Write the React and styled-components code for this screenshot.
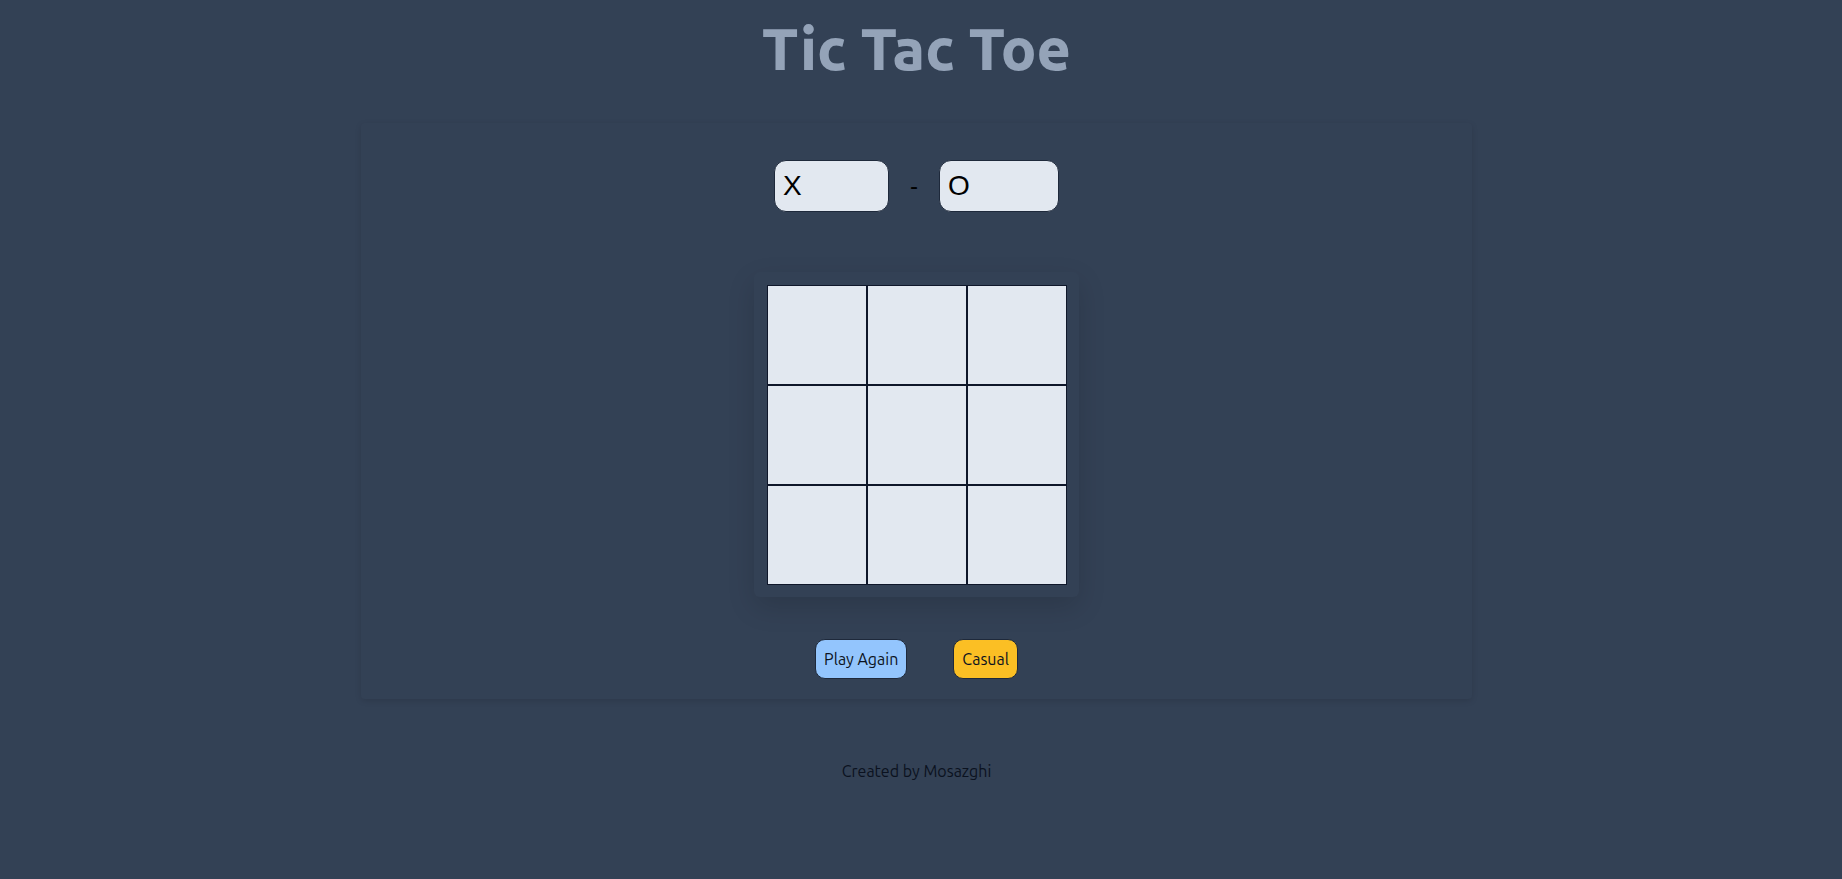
import styled, { createGlobalStyle } from 'styled-components';

const GlobalStyle = createGlobalStyle`
  * { box-sizing: border-box; }
  body {
    margin: 0;
    background-color: #334155;
    font-family: Ubuntu, "Open Sans", "DejaVu Sans", sans-serif;
  }
`;

export default function App() {
  const cells = Array.from({ length: 9 }, (_, i) => i);

  return (
    <Page>
      <GlobalStyle />
      <Title>Tic Tac Toe</Title>
      <Panel>
        <ScoreRow>
          <ScoreInput readOnly value="X" $width={115} />
          <Dash>-</Dash>
          <ScoreInput readOnly value="O" $width={120} />
        </ScoreRow>
        <BoardWrap>
          <Board>
            {cells.map((i) => (
              <Cell key={i} />
            ))}
          </Board>
        </BoardWrap>
        <ButtonRow>
          <ActionButton $bg="#93c5fd">Play Again</ActionButton>
          <ActionButton $bg="#fbbf24">Casual</ActionButton>
        </ButtonRow>
      </Panel>
      <Footer>Created by Mosazghi</Footer>
    </Page>
  );
}

const Page = styled.div`
  display: flex;
  flex-direction: column;
  align-items: center;
  min-height: 100vh;
  padding-right: 9px;
`;

const Title = styled.h1`
  margin: 18px 0 0;
  font-size: 59px;
  line-height: 60px;
  font-weight: 800;
  color: #94a3b8;
`;

const Panel = styled.main`
  width: 1111px;
  margin-top: 45px;
  padding: 37px 0 20px;
  display: flex;
  flex-direction: column;
  align-items: center;
  box-shadow: 0 2px 6px rgba(0, 0, 0, 0.12);
  border-radius: 4px;
`;

const ScoreRow = styled.div`
  display: flex;
  align-items: center;
  gap: 21px;
`;

const ScoreInput = styled.input`
  width: ${(p) => p.$width}px;
  height: 52px;
  padding: 0 8px;
  border: 1px solid #1e293b;
  border-radius: 12px;
  background: #e2e8f0;
  color: #000;
  font-family: "Liberation Sans", Arial, sans-serif;
  font-size: 28px;
  outline: none;
`;

const Dash = styled.span`
  font-family: "Liberation Sans", Arial, sans-serif;
  font-size: 24px;
  color: #000;
`;

const BoardWrap = styled.div`
  margin-top: 60px;
  padding: 13px 12px 12px 13px;
  border-radius: 6px;
  box-shadow: 0 10px 28px rgba(0, 0, 0, 0.14);
`;

const Board = styled.div`
  display: grid;
  grid-template-columns: repeat(3, 100px);
  grid-template-rows: repeat(3, 100px);
`;

const Cell = styled.div`
  background: #e2e8f0;
  border: 1px solid #0f172a;
`;

const ButtonRow = styled.div`
  display: flex;
  gap: 46px;
  margin-top: 42px;
`;

const ActionButton = styled.button`
  height: 40px;
  padding: 0 8px;
  border: 1px solid #1e293b;
  border-radius: 10px;
  background: ${(p) => p.$bg};
  color: #0b1220;
  font-family: Ubuntu, "Open Sans", sans-serif;
  font-size: 16px;
  cursor: pointer;
`;

const Footer = styled.footer`
  margin-top: 60px;
  font-size: 16px;
  line-height: 24px;
  color: #0b1220;
`;
